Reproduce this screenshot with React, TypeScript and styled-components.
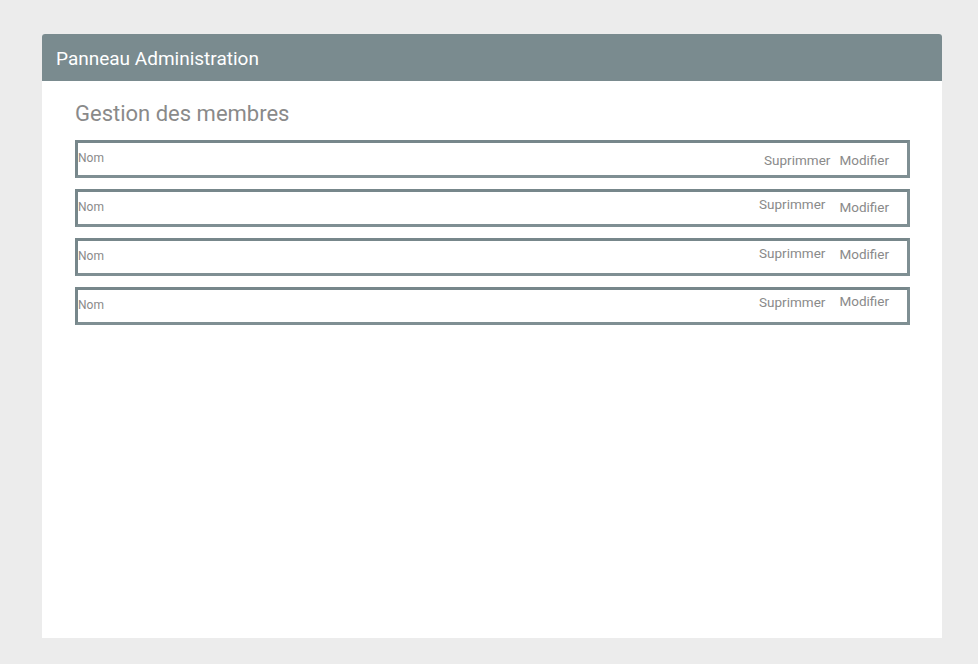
import React from "react";
import styled, { createGlobalStyle } from "styled-components";

const GlobalStyle = createGlobalStyle`
  html, body {
    margin: 0;
    padding: 0;
    background: #ececec;
    font-family: Roboto, "Liberation Sans", sans-serif;
  }
`;

const Page = styled.div`
  padding: 34px 36px 26px 42px;
`;

const Card = styled.div`
  height: 604px;
  background: #ffffff;
  border-radius: 3px 3px 0 0;
  overflow: hidden;
`;

const Header = styled.div`
  height: 47px;
  box-sizing: border-box;
  background: #7a8b8f;
  display: flex;
  align-items: center;
  padding: 2px 0 0 14px;
  color: #ffffff;
  font-size: 19px;
`;

const Content = styled.div`
  padding: 20px 32px 0 33px;
`;

const Title = styled.h2`
  margin: 0 0 13px 0;
  font-size: 22px;
  line-height: 26px;
  font-weight: 400;
  color: #8a8a8a;
`;

const MemberList = styled.div`
  display: flex;
  flex-direction: column;
  gap: 11px;
`;

const MemberRow = styled.div`
  height: 38px;
  box-sizing: border-box;
  border: 3px solid #7f8f93;
  border-top-color: #77878b;
  border-left-color: #77878b;
  display: flex;
  align-items: flex-start;
  padding-right: 18px;
`;

const Name = styled.span`
  margin-top: 7px;
  font-size: 12px;
  line-height: 16px;
  color: #8a8a8a;
  flex: 1;
`;

const RowButton = styled.button<{ $top: number; $gap?: number }>`
  margin-top: ${(p) => p.$top}px;
  margin-left: ${(p) => p.$gap ?? 0}px;
  padding: 0;
  border: none;
  background: transparent;
  font-family: Roboto, "Liberation Sans", sans-serif;
  font-size: 13.5px;
  line-height: 16px;
  color: #8a8a8a;
  cursor: pointer;
`;

const rows = [
  { del: 9, edit: 9, gap: 9 },
  { del: 4, edit: 7, gap: 14 },
  { del: 4, edit: 5, gap: 14 },
  { del: 4, edit: 3, gap: 14 },
];

function App() {
  return (
    <Page>
      <GlobalStyle />
      <Card>
        <Header>Panneau Administration</Header>
        <Content>
          <Title>Gestion des membres</Title>
          <MemberList>
            {rows.map((r, i) => (
              <MemberRow key={i}>
                <Name>Nom</Name>
                <RowButton $top={r.del}>Suprimmer</RowButton>
                <RowButton $top={r.edit} $gap={r.gap}>
                  Modifier
                </RowButton>
              </MemberRow>
            ))}
          </MemberList>
        </Content>
      </Card>
    </Page>
  );
}

export default App;
